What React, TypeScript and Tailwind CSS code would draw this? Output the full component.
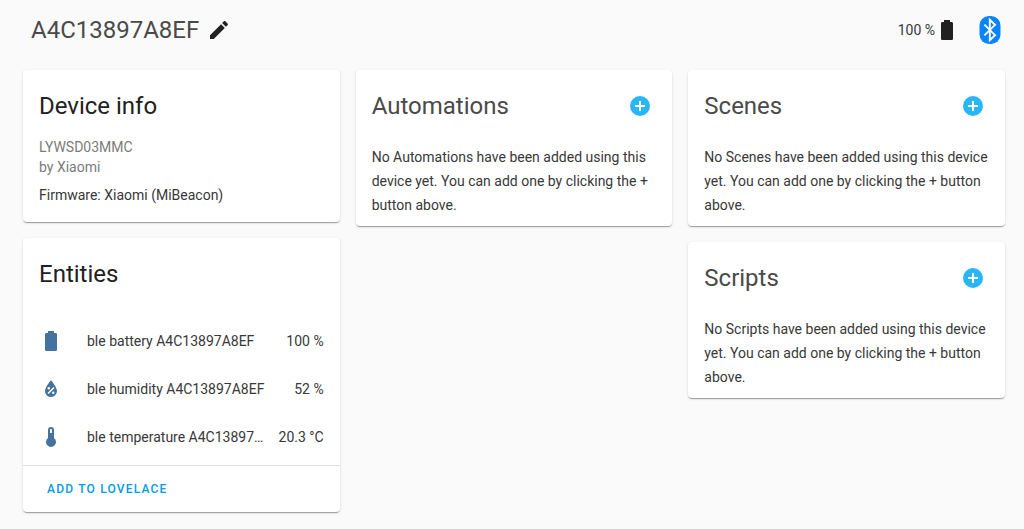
import React from 'react';

const ICONS = {
    pencil: 'M20.71,7.04C21.1,6.65 21.1,6 20.71,5.63L18.37,3.29C18,2.9 17.35,2.9 16.96,3.29L15.12,5.12L18.87,8.87M3,17.25V21H6.75L17.81,9.93L14.06,6.18L3,17.25Z',
    battery: 'M16.67,4H15V2H9V4H7.33A1.33,1.33 0 0,0 6,5.33V20.67C6,21.4 6.6,22 7.33,22H16.67A1.33,1.33 0 0,0 18,20.67V5.33C18,4.6 17.4,4 16.67,4Z',
    humidity: 'M12,3.25C12,3.25 6,10 6,14C6,17.32 8.69,20 12,20A6,6 0 0,0 18,14C18,10 12,3.25 12,3.25M14.47,9.97L15.53,11.03L9.53,17.03L8.47,15.97M9.75,10A1.25,1.25 0 0,1 11,11.25A1.25,1.25 0 0,1 9.75,12.5A1.25,1.25 0 0,1 8.5,11.25A1.25,1.25 0 0,1 9.75,10M14.25,14.5A1.25,1.25 0 0,1 15.5,15.75A1.25,1.25 0 0,1 14.25,17A1.25,1.25 0 0,1 13,15.75A1.25,1.25 0 0,1 14.25,14.5Z',
    temperature: 'M15,13V5A3,3 0 0,0 9,5V13A5,5 0 1,0 15,13M12,4A1,1 0 0,1 13,5V8H11V5A1,1 0 0,1 12,4Z',
    plusCircle: 'M17,13H13V17H11V13H7V11H11V7H13V11H17M12,2A10,10 0 0,0 2,12A10,10 0 0,0 12,22A10,10 0 0,0 22,12A10,10 0 0,0 12,2Z',
};

type IconName = keyof typeof ICONS;

type Entity = {
    icon: IconName;
    name: string;
    state: string;
};

const entities: Entity[] = [
    { icon: 'battery', name: 'ble battery A4C13897A8EF', state: '100 %' },
    { icon: 'humidity', name: 'ble humidity A4C13897A8EF', state: '52 %' },
    { icon: 'temperature', name: 'ble temperature A4C13897A8EF', state: '20.3 °C' },
];

function Icon({ name }: { name: IconName }) {
    return (
        <svg viewBox="0 0 24 24" className="size-6 shrink-0 fill-current" aria-hidden="true">
            <path d={ICONS[name]} />
        </svg>
    );
}

function BluetoothLogo() {
    return (
        <svg viewBox="0 0 22 28" className="h-7 w-[22px] shrink-0" role="img" aria-label="Bluetooth">
            <rect x="0.5" width="21" height="28" rx="9.5" fill="#0a84fc" />
            <path d="M5.4,8.6L16,19.2L10.8,24.2V3.8L16,8.8L5.4,19.4" fill="none" stroke="#fff" strokeWidth="1.9" />
        </svg>
    );
}

function Card({ children }: { children: React.ReactNode }) {
    return (
        <section className="rounded-sm bg-white shadow-[0_2px_1px_-1px_rgba(0,0,0,0.2),0_1px_1px_0_rgba(0,0,0,0.14),0_1px_3px_0_rgba(0,0,0,0.12)]">
            {children}
        </section>
    );
}

function RelatedCard({ title }: { title: string }) {
    return (
        <Card>
            <div className="flex items-center justify-between px-4 pt-3 pb-[15px] text-[#4a4a4a]">
                <h2 className="text-2xl leading-12">{title}</h2>
                <button type="button" aria-label={`Add ${title}`} className="flex size-8 items-center justify-center text-[#29b6f6]">
                    <Icon name="plusCircle" />
                </button>
            </div>
            <p className="px-4 pb-[9px] leading-6">
                {`No ${title} have been added using this device yet. You can add one by clicking the + button above.`}
            </p>
        </Card>
    );
}

export default function App() {
    return (
        <div className="min-h-screen bg-[#fafafa] pr-[19px] pb-4 pl-[23px] font-[Roboto,sans-serif] text-sm text-[#383838]">
            <header className="flex items-center justify-between pt-2.5 pb-5 pl-2">
                <div className="flex items-center gap-2">
                    <h1 className="text-2xl leading-10 text-[#4a4a4a]">A4C13897A8EF</h1>
                    <button type="button" aria-label="Rename device" className="text-[#212121]">
                        <Icon name="pencil" />
                    </button>
                </div>
                <div className="flex items-center pr-1">
                    <span>100 %</span>
                    <span className="mr-5 text-[#212121]">
                        <Icon name="battery" />
                    </span>
                    <BluetoothLogo />
                </div>
            </header>

            <main className="grid grid-cols-3 items-start gap-4">
                <div className="flex min-w-0 flex-col gap-4">
                    <Card>
                        <h2 className="px-4 pt-3 pb-[7px] text-2xl leading-12 text-[#212121]">Device info</h2>
                        <div className="px-4 pb-[17px] leading-5">
                            <p className="text-[#7b7b7b]">LYWSD03MMC</p>
                            <p className="text-[#7b7b7b]">by Xiaomi</p>
                            <p className="mt-2">Firmware: Xiaomi (MiBeacon)</p>
                        </div>
                    </Card>
                    <Card>
                        <h2 className="px-4 pt-3 pb-[15px] text-2xl leading-12 text-[#212121]">Entities</h2>
                        <ul className="flex flex-col gap-2 px-4 py-2">
                            {entities.map((entity) => (
                                <li key={entity.name} className="flex h-10 items-center">
                                    <span className="text-[#44739e]">
                                        <Icon name={entity.icon} />
                                    </span>
                                    <span className="ml-6 min-w-0 flex-1 truncate">{entity.name}</span>
                                    <span className="ml-3 whitespace-nowrap">{entity.state}</span>
                                </li>
                            ))}
                        </ul>
                        <div className="border-t border-[#e0e0e0] px-4 py-[7px]">
                            <button type="button" className="h-8 px-2 text-xs font-medium tracking-widest text-[#039be5] uppercase">
                                Add to Lovelace
                            </button>
                        </div>
                    </Card>
                </div>
                <RelatedCard title="Automations" />
                <div className="flex min-w-0 flex-col gap-4">
                    <RelatedCard title="Scenes" />
                    <RelatedCard title="Scripts" />
                </div>
            </main>
        </div>
    );
}
